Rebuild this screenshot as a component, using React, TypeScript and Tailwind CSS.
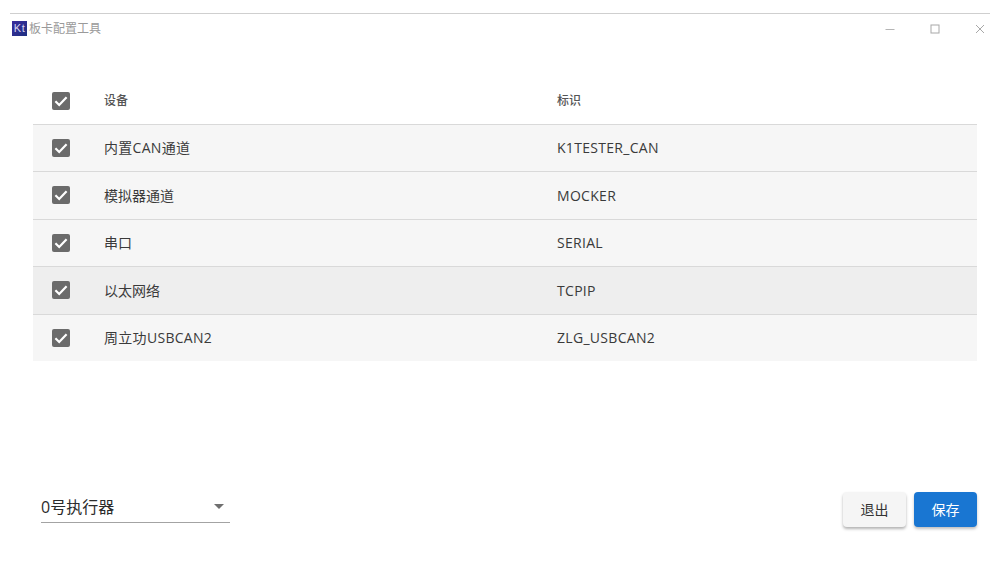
const rows = [
  { name: "内置CAN通道", id: "K1TESTER_CAN", latin: true },
  { name: "模拟器通道", id: "MOCKER" },
  { name: "串口", id: "SERIAL" },
  { name: "以太网络", id: "TCPIP", hover: true },
  { name: "周立功USBCAN2", id: "ZLG_USBCAN2", latin: true },
];

function Check() {
  return (
    <svg width="18" height="18" viewBox="0 0 18 18" className="block">
      <rect width="18" height="18" rx="2" fill="#6b6b6b" />
      <path d="M3.4 9.2l3.8 3.8 7.4-7.8" fill="none" stroke="#fff" strokeWidth="2.2" />
    </svg>
  );
}

export default function App() {
  return (
    <div className="flex h-[576px] w-[1000px] flex-col overflow-hidden bg-white font-['Open_Sans','Noto_Sans_CJK_SC',sans-serif] text-[#3a3a3a]">
      {/* title bar */}
      <div className="mx-[10px] mt-[13px] flex h-[30px] items-center border-t border-[#cfcfcf] pl-[2px] pr-[5px]">
        <div className="flex h-[15px] w-[15px] items-center justify-center bg-gradient-to-br from-[#3b2c9e] to-[#1d2f80] font-['Liberation_Sans',sans-serif] text-[11px] leading-none tracking-[0.5px] text-[#d9d4f2]">
          Kt
        </div>
        <span className="ml-[2px] text-[12px] text-[#9a9a9a]">板卡配置工具</span>
        <div className="ml-auto flex items-center gap-[35px]">
          <svg width="10" height="10" viewBox="0 0 10 10">
            <path d="M0.5 5.5h9" stroke="#b5b5b5" strokeWidth="1" />
          </svg>
          <svg width="10" height="10" viewBox="0 0 10 10">
            <rect x="1" y="1" width="8" height="8" fill="none" stroke="#a8a8a8" strokeWidth="1" />
          </svg>
          <svg width="10" height="10" viewBox="0 0 10 10">
            <path d="M1 1l8 8M9 1l-8 8" stroke="#a8a8a8" strokeWidth="1" />
          </svg>
        </div>
      </div>

      {/* table */}
      <div className="ml-[33px] mr-[23px] mt-[32.6px] text-[14px]">
        <div className="grid h-[48px] grid-cols-[71px_453px_1fr] items-center pt-[2px] text-[12px] font-medium text-[#555]">
          <div className="pl-[19px]">
            <Check />
          </div>
          <div>设备</div>
          <div>标识</div>
        </div>
        {rows.map((row) => (
          <div
            key={row.id}
            className={`grid h-[47.5px] grid-cols-[71px_453px_1fr] items-center border-t border-[#d9d9d9] ${
              row.hover ? "bg-[#eeeeee]" : "bg-[#f6f6f6]"
            }`}
          >
            <div className="pl-[19px]">
              <Check />
            </div>
            <div className={row.latin ? "tracking-[0.3px]" : ""}>{row.name}</div>
            <div className="tracking-[0.3px]">{row.id}</div>
          </div>
        ))}
      </div>

      {/* footer */}
      <div className="mt-auto mb-[49px] flex items-start justify-between pl-[41px] pr-[23px]">
        <div className="flex h-[31px] w-[189px] items-center justify-between border-b border-[#a3a3a3] pb-[1px] pr-[6px] text-[16px] text-[#2b2b2b]">
          <span>0号执行器</span>
          <span className="h-0 w-0 border-x-[5px] border-t-[5px] border-x-transparent border-t-[#6f6f6f]" />
        </div>
        <div className="flex gap-[8px] text-[14px]">
          <button className="h-[35px] w-[63px] rounded-[4px] bg-[#f5f5f5] text-[#333] shadow-[0_2px_3px_rgba(0,0,0,0.3)]">
            退出
          </button>
          <button className="h-[35px] w-[63px] rounded-[4px] bg-[#1976d2] text-white shadow-[0_2px_3px_rgba(0,0,0,0.25)]">
            保存
          </button>
        </div>
      </div>
    </div>
  );
}
